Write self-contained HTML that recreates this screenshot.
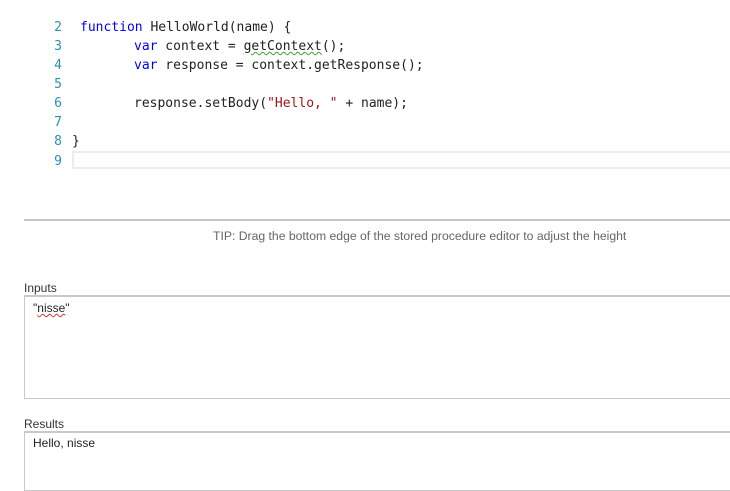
<!DOCTYPE html>
<html><head><style>
body{margin:0;width:730px;height:470px;background:#fff;position:relative;overflow:hidden;font-family:"DejaVu Sans","Liberation Sans",sans-serif;}
.ln{position:absolute;left:40px;width:22px;text-align:right;color:#2b91af;font:13px "DejaVu Sans Mono","Liberation Mono",monospace;}
.cd{position:absolute;left:80px;white-space:pre;color:#222;font:13px "DejaVu Sans Mono","Liberation Mono",monospace;}
.kw{color:#0000ff}.st{color:#a31515}
.lbl{position:absolute;left:24px;font-size:12px;color:#333;font-family:"Liberation Sans",sans-serif;}
.box{position:absolute;left:24px;width:720px;border:1px solid #c8c8c8;border-top:2px solid #c8c8c8;box-sizing:border-box;}
.txt{position:absolute;font-size:12px;color:#222;font-family:"Liberation Sans",sans-serif;}
</style></head><body>
<div class="ln" style="top:20px">2</div>
<div class="ln" style="top:39px">3</div>
<div class="ln" style="top:58px">4</div>
<div class="ln" style="top:77px">5</div>
<div class="ln" style="top:96px">6</div>
<div class="ln" style="top:115px">7</div>
<div class="ln" style="top:134px">8</div>
<div class="ln" style="top:154px">9</div>
<div class="cd" style="top:20px"><span class="kw">function</span> HelloWorld(name) {</div>
<div class="cd" style="top:39px;left:134px"><span class="kw">var</span> context = <span style="text-decoration:underline wavy #3a3;text-decoration-thickness:1px">getContext</span>();</div>
<div class="cd" style="top:58px;left:134px"><span class="kw">var</span> response = context.getResponse();</div>
<div class="cd" style="top:96px;left:134px">response.setBody(<span class="st">"Hello, "</span> + name);</div>
<div class="cd" style="top:134px;left:72px">}</div>
<div style="position:absolute;left:72px;top:151px;width:670px;height:18px;border:2px solid #ececec;box-sizing:border-box"></div>
<div style="position:absolute;left:24px;top:219px;width:706px;height:2px;background:#c4c4c4"></div>
<div class="txt" style="left:213px;top:229px;color:#666;font-size:12.2px">TIP: Drag the bottom edge of the stored procedure editor to adjust the height</div>
<div class="lbl" style="top:281px">Inputs</div>
<div class="box" style="top:295px;height:104px"></div>
<div class="txt" style="left:33px;top:301px">"<span style="text-decoration:underline wavy #d33;text-decoration-thickness:1px">nisse</span>"</div>
<div class="lbl" style="top:417px">Results</div>
<div class="box" style="top:431px;height:60px"></div>
<div class="txt" style="left:33px;top:436px">Hello, nisse</div>
</body></html>
